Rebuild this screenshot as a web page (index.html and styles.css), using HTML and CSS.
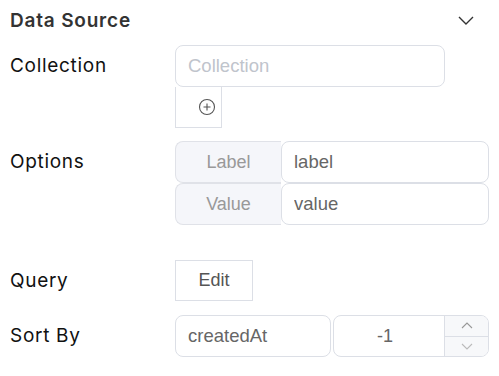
FILE: index.html
```html
<!DOCTYPE html>
<html lang="en">
<head>
    <meta charset="UTF-8">
    <title>Data Source</title>
    <link rel="stylesheet" href="styles.css">
</head>
<body>
<div class="panel">
    <div class="panel-header">
        <h2 class="panel-title">Data Source</h2>
        <svg class="chevron" width="16" height="9" viewBox="0 0 16 9">
            <path d="M1 1 L8 8 L15 1" fill="none" stroke="#333" stroke-width="1.4"/>
        </svg>
    </div>

    <div class="field">
        <label class="field-label">Collection</label>
        <div class="field-control">
            <input class="text-input collection-input" type="text" placeholder="Collection">
            <div class="add-box">
                <svg width="18" height="18" viewBox="0 0 18 18">
                    <circle cx="9" cy="9" r="7.5" fill="none" stroke="#555" stroke-width="1.1"/>
                    <path d="M9 5.5 V12.5 M5.5 9 H12.5" stroke="#555" stroke-width="1.1"/>
                </svg>
            </div>
        </div>
    </div>

    <div class="field field-options">
        <label class="field-label">Options</label>
        <div class="field-control">
            <div class="addon-row">
                <span class="addon">Label</span>
                <input class="text-input" type="text" value="label">
            </div>
            <div class="addon-row">
                <span class="addon">Value</span>
                <input class="text-input" type="text" value="value">
            </div>
        </div>
    </div>

    <div class="field">
        <label class="field-label">Query</label>
        <div class="field-control">
            <button class="edit-btn" type="button">Edit</button>
        </div>
    </div>

    <div class="field">
        <label class="field-label">Sort By</label>
        <div class="field-control sort-control">
            <input class="text-input sort-field" type="text" value="createdAt">
            <div class="number-input">
                <span class="number-value">-1</span>
                <div class="spinner">
                    <span class="spin">
                        <svg width="12" height="7" viewBox="0 0 12 7"><path d="M1 6 L6 1 L11 6" fill="none" stroke="#999" stroke-width="1.1"/></svg>
                    </span>
                    <span class="spin">
                        <svg width="12" height="7" viewBox="0 0 12 7"><path d="M1 1 L6 6 L11 1" fill="none" stroke="#bbb" stroke-width="1.1"/></svg>
                    </span>
                </div>
            </div>
        </div>
    </div>
</div>
</body>
</html>
```

FILE: styles.css
```css
/* Page */
body {
    margin: 0;
    background: #fff;
    font-family: Inter, "Noto Sans", sans-serif;
    color: #111;
}

.panel {
    padding: 0 10px;
}

/* Header */
.panel-header {
    display: flex;
    justify-content: space-between;
    align-items: center;
    height: 40px;
    margin-bottom: 5px;
    padding-right: 15px;
}

.panel-title {
    margin: 0;
    font-size: 19px;
    font-weight: 600;
    letter-spacing: 0.8px;
    color: #333;
}

/* Rows */
.field {
    display: grid;
    grid-template-columns: 165px minmax(0, 1fr);
    margin-bottom: 13px;
}

.field-options {
    margin-bottom: 35px;
}

.field-label {
    font-size: 19px;
    letter-spacing: 0.7px;
    line-height: 42px;
    color: #111;
}

.field-control {
    display: flex;
    flex-direction: column;
    align-items: flex-start;
    min-width: 0;
}

/* Inputs */
.text-input {
    box-sizing: border-box;
    height: 42px;
    padding: 0 12px;
    border: 1px solid #dcdfe6;
    border-radius: 8px;
    font-family: "Liberation Sans", Arial, sans-serif;
    font-size: 18.5px;
    color: #666;
    background: #fff;
    outline: none;
}

.text-input::placeholder {
    color: #c0c4cc;
}

.collection-input {
    width: 270px;
}

.add-box {
    box-sizing: border-box;
    width: 47px;
    height: 41px;
    border: 1px solid #dcdfe6;
    border-top: none;
    display: flex;
    justify-content: flex-end;
    align-items: center;
    padding-right: 5px;
}

/* Options */
.addon-row {
    display: flex;
    width: 100%;
}

.addon {
    box-sizing: border-box;
    width: 106px;
    height: 42px;
    line-height: 40px;
    text-align: center;
    border: 1px solid #e0e2e8;
    border-right: none;
    border-radius: 8px 0 0 8px;
    background: #f5f6fa;
    font-family: "Liberation Sans", Arial, sans-serif;
    font-size: 18px;
    color: #999;
}

.addon-row .text-input {
    flex: 1;
    min-width: 0;
    width: 0;
}

/* Query */
.edit-btn {
    box-sizing: border-box;
    width: 78px;
    height: 41px;
    border: 1px solid #dcdfe6;
    background: #fff;
    font-family: "Liberation Sans", Arial, sans-serif;
    font-size: 18px;
    color: #555;
    padding: 0;
}

/* Sort */
.sort-control {
    flex-direction: row;
    gap: 2px;
}

.sort-field {
    width: 156px;
}

.number-input {
    box-sizing: border-box;
    flex: 1;
    height: 42px;
    display: flex;
    border: 1px solid #dcdfe6;
    border-radius: 8px;
    overflow: hidden;
}

.number-value {
    flex: 1;
    text-align: center;
    line-height: 40px;
    font-family: "Liberation Sans", Arial, sans-serif;
    font-size: 18px;
    color: #666;
    padding-right: 8px;
}

.spinner {
    width: 43px;
    display: flex;
    flex-direction: column;
    border-left: 1px solid #dcdfe6;
    background: #f7f8fa;
}

.spin {
    flex: 1;
    display: flex;
    justify-content: center;
    align-items: center;
}

.spin + .spin {
    border-top: 1px solid #dcdfe6;
}
```
